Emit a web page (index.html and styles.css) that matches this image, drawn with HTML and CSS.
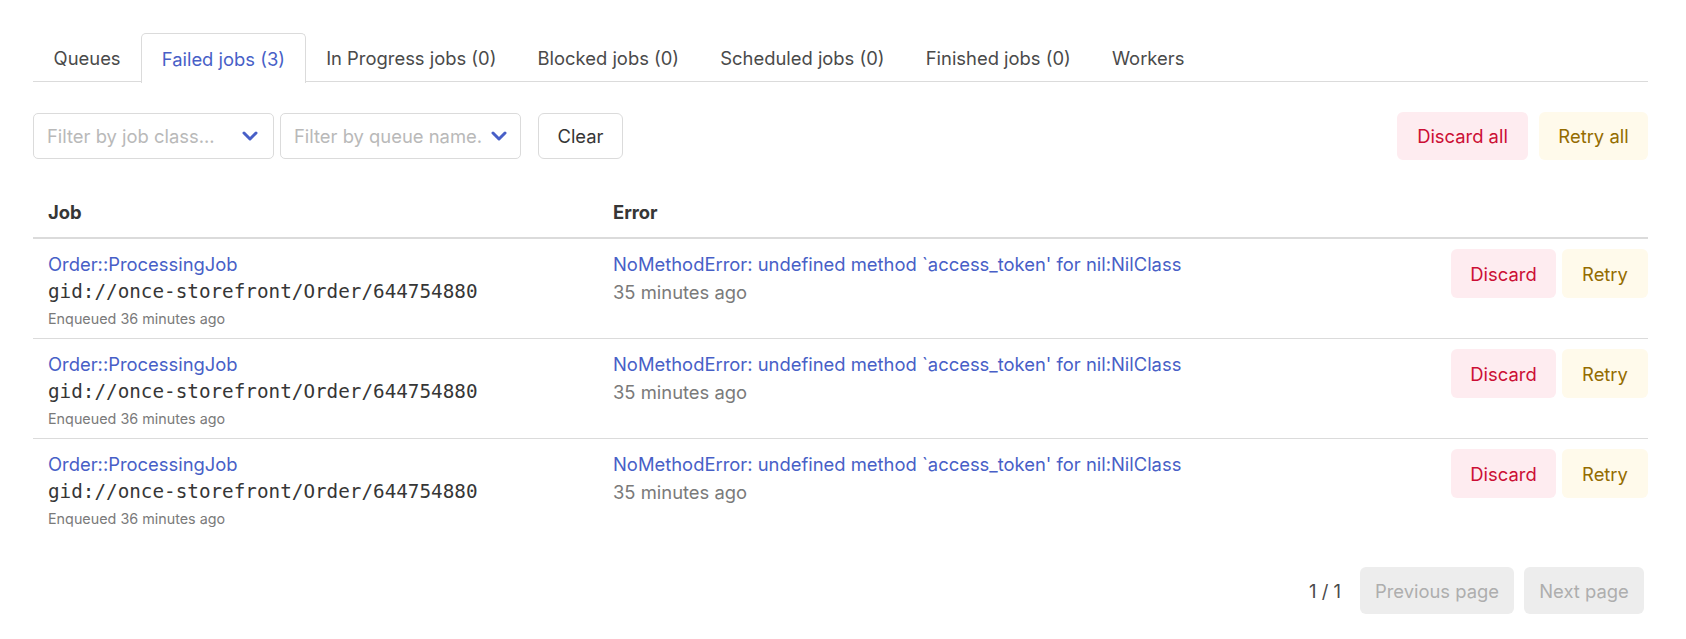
FILE: index.html
```html
<!DOCTYPE html>
<html lang="en">
<head>
<meta charset="utf-8">
<title>Failed jobs</title>
<link rel="stylesheet" href="styles.css">
</head>
<body>
<main class="page">
  <nav class="tabs">
    <a class="tab">Queues</a>
    <a class="tab is-active">Failed jobs (3)</a>
    <a class="tab">In Progress jobs (0)</a>
    <a class="tab">Blocked jobs (0)</a>
    <a class="tab">Scheduled jobs (0)</a>
    <a class="tab">Finished jobs (0)</a>
    <a class="tab">Workers</a>
  </nav>

  <div class="toolbar">
    <div class="filters">
      <div class="select">
        <span class="placeholder">Filter by job class...</span>
        <svg class="chevron" viewBox="0 0 16 10" width="16" height="10"><polyline points="2,2 8,8 14,2" fill="none" stroke="#485fc7" stroke-width="3" stroke-linecap="round" stroke-linejoin="round"/></svg>
      </div>
      <div class="select select-tight">
        <span class="placeholder">Filter by queue name.</span>
        <svg class="chevron" viewBox="0 0 16 10" width="16" height="10"><polyline points="2,2 8,8 14,2" fill="none" stroke="#485fc7" stroke-width="3" stroke-linecap="round" stroke-linejoin="round"/></svg>
      </div>
      <button class="btn btn-clear">Clear</button>
    </div>
    <div class="bulk">
      <button class="btn btn-danger btn-lg">Discard all</button>
      <button class="btn btn-warning btn-lg">Retry all</button>
    </div>
  </div>

  <div class="table">
    <div class="row head">
      <div class="cell job">Job</div>
      <div class="cell error">Error</div>
      <div class="cell actions"></div>
    </div>

    <div class="row">
      <div class="cell job">
        <a class="link">Order::ProcessingJob</a>
        <div class="mono">gid://once-storefront/Order/644754880</div>
        <div class="small">Enqueued 36 minutes ago</div>
      </div>
      <div class="cell error">
        <a class="link">NoMethodError: undefined method `access_token' for nil:NilClass</a>
        <div class="muted">35 minutes ago</div>
      </div>
      <div class="cell actions">
        <button class="btn btn-danger btn-row">Discard</button>
        <button class="btn btn-warning btn-row">Retry</button>
      </div>
    </div>

    <div class="row">
      <div class="cell job">
        <a class="link">Order::ProcessingJob</a>
        <div class="mono">gid://once-storefront/Order/644754880</div>
        <div class="small">Enqueued 36 minutes ago</div>
      </div>
      <div class="cell error">
        <a class="link">NoMethodError: undefined method `access_token' for nil:NilClass</a>
        <div class="muted">35 minutes ago</div>
      </div>
      <div class="cell actions">
        <button class="btn btn-danger btn-row">Discard</button>
        <button class="btn btn-warning btn-row">Retry</button>
      </div>
    </div>

    <div class="row last">
      <div class="cell job">
        <a class="link">Order::ProcessingJob</a>
        <div class="mono">gid://once-storefront/Order/644754880</div>
        <div class="small">Enqueued 36 minutes ago</div>
      </div>
      <div class="cell error">
        <a class="link">NoMethodError: undefined method `access_token' for nil:NilClass</a>
        <div class="muted">35 minutes ago</div>
      </div>
      <div class="cell actions">
        <button class="btn btn-danger btn-row">Discard</button>
        <button class="btn btn-warning btn-row">Retry</button>
      </div>
    </div>
  </div>

  <div class="pagination">
    <span class="page-count">1 / 1</span>
    <button class="btn btn-disabled btn-prev">Previous page</button>
    <button class="btn btn-disabled btn-next">Next page</button>
  </div>
</main>
</body>
</html>
```

FILE: styles.css
```css
* { box-sizing: border-box; }

html, body {
  margin: 0;
  padding: 0;
  background: #ffffff;
}

body {
  font-family: Inter, "Noto Sans", "Liberation Sans", sans-serif;
  font-size: 18.4px;
  color: #4a4a4a;
}

.page {
  padding: 33px 38px 0 33px;
}

/* Tabs */
.tabs {
  display: flex;
  border-bottom: 1px solid #dbdbdb;
  height: 49px;
}

.tab {
  display: flex;
  align-items: center;
  padding: 0 19.6px;
  color: #4a4a4a;
  border: 1px solid transparent;
  border-bottom: none;
  border-radius: 5px 5px 0 0;
  margin-bottom: -1px;
  height: 49px;
  white-space: nowrap;
}

.tab.is-active {
  color: #485fc7;
  border-color: #dbdbdb;
  background: #fff;
  height: 50px;
}

/* Toolbar */
.toolbar {
  display: flex;
  justify-content: space-between;
  align-items: center;
  margin-top: 30px;
}

.filters {
  display: flex;
  align-items: center;
}

.select {
  width: 241px;
  height: 46px;
  border: 1px solid #dbdbdb;
  border-radius: 5px;
  display: flex;
  align-items: center;
  justify-content: space-between;
  padding: 0 15px 0 13px;
  margin-right: 6px;
}

.select-tight {
  padding-right: 13px;
}

.placeholder {
  color: #b9b9b9;
  white-space: nowrap;
}

.chevron {
  flex: none;
  margin-left: 1px;
}

.btn {
  font-family: inherit;
  font-size: 18.4px;
  border: 1px solid transparent;
  border-radius: 6px;
  background: #fff;
  cursor: pointer;
  padding: 0;
  white-space: nowrap;
}

.btn-clear {
  height: 46px;
  width: 85px;
  margin-left: 11px;
  border-color: #dbdbdb;
  color: #363636;
}

.bulk {
  display: flex;
  gap: 11px;
}

.btn-lg {
  height: 48px;
}

.btn-danger {
  background: #feecf0;
  color: #cc0f35;
}

.btn-warning {
  background: #fffaeb;
  color: #946c00;
}

.bulk .btn-danger { width: 131px; }
.bulk .btn-warning { width: 109px; }

/* Table */
.table {
  margin-top: 27px;
}

.row {
  display: grid;
  grid-template-columns: 565px 1fr auto;
  border-bottom: 1px solid #dbdbdb;
  height: 100px;
}

.row.head {
  height: 52px;
  border-bottom: 2px solid #dbdbdb;
  font-weight: 700;
  color: #363636;
  align-items: center;
}

.row.last {
  border-bottom: none;
}

.cell {
  padding: 0 15px;
}

.row:not(.head) .cell {
  padding-top: 12px;
}

.row .cell.actions {
  padding-right: 0;
  padding-top: 10px;
  display: flex;
  gap: 6px;
  align-items: flex-start;
}

.link {
  color: #485fc7;
  display: block;
  line-height: 26px;
}

.mono {
  font-family: "DejaVu Sans Mono", "Liberation Mono", monospace;
  font-size: 19.3px;
  color: #363636;
  line-height: 29px;
}

.small {
  font-size: 14.35px;
  color: #7a7a7a;
  line-height: 25px;
}

.muted {
  color: #7a7a7a;
  line-height: 30px;
}

.btn-row {
  height: 49px;
}

.row .btn-danger { width: 105px; }
.row .btn-warning { width: 86px; }

/* Pagination */
.pagination {
  display: flex;
  justify-content: flex-end;
  align-items: center;
  gap: 10px;
  margin-top: 28px;
  padding-right: 4px;
}

.page-count {
  color: #4a4a4a;
  margin-right: 9px;
}

.btn-disabled {
  height: 47px;
  background: #ededed;
  color: #aeaeae;
  cursor: default;
}

.btn-prev { width: 154px; }
.btn-next { width: 120px; }
```
